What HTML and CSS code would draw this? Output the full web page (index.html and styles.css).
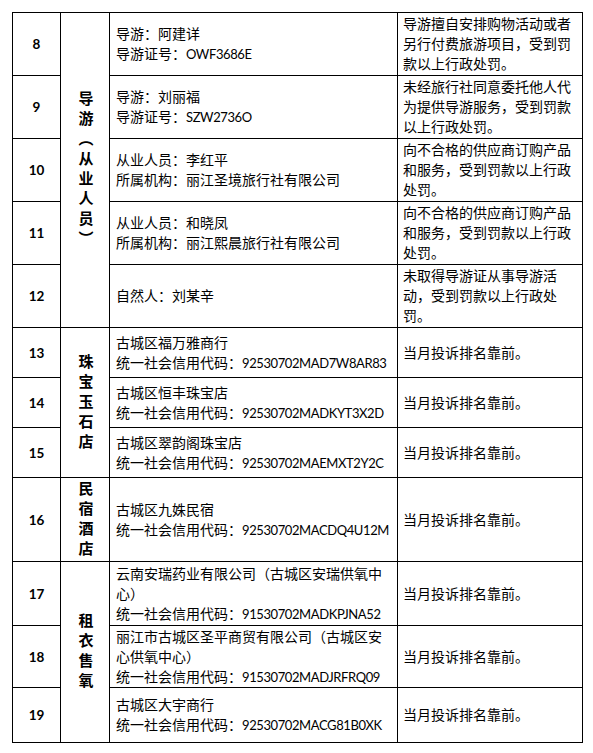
FILE: index.html
```html
<!DOCTYPE html>
<html lang="zh-CN">
<head>
<meta charset="utf-8">
<link rel="stylesheet" href="styles.css">
</head>
<body>
<table class="tbl">
  <colgroup>
    <col class="c-no"><col class="c-cat"><col class="c-name"><col class="c-reason">
  </colgroup>
  <tr class="r63">
    <td class="no">8</td>
    <td class="cat" rowspan="5"><span class="vt">导游（从业人员）</span></td>
    <td class="name">导游：阿建详<br><span class="ln">导游证号：<span class="code">OWF3686E</span></span></td>
    <td class="reason">导游擅自安排购物活动或者另行付费旅游项目，受到罚款以上行政处罚。</td>
  </tr>
  <tr class="r63">
    <td class="no">9</td>
    <td class="name">导游：刘丽福<br><span class="ln">导游证号：<span class="code">SZW2736O</span></span></td>
    <td class="reason">未经旅行社同意委托他人代为提供导游服务，受到罚款以上行政处罚。</td>
  </tr>
  <tr class="r63">
    <td class="no">10</td>
    <td class="name">从业人员：李红平<br>所属机构：丽江圣境旅行社有限公司</td>
    <td class="reason">向不合格的供应商订购产品和服务，受到罚款以上行政处罚。</td>
  </tr>
  <tr class="r63">
    <td class="no">11</td>
    <td class="name">从业人员：和晓凤<br>所属机构：丽江熙晨旅行社有限公司</td>
    <td class="reason">向不合格的供应商订购产品和服务，受到罚款以上行政处罚。</td>
  </tr>
  <tr class="r63">
    <td class="no">12</td>
    <td class="name">自然人：刘某辛</td>
    <td class="reason">未取得导游证从事导游活动，受到罚款以上行政处罚。</td>
  </tr>
  <tr class="r50">
    <td class="no">13</td>
    <td class="cat" rowspan="3"><span class="vt">珠宝玉石店</span></td>
    <td class="name">古城区福万雅商行<br><span class="ln">统一社会信用代码：<span class="code">92530702MAD7W8AR83</span></span></td>
    <td class="reason">当月投诉排名靠前。</td>
  </tr>
  <tr class="r50">
    <td class="no">14</td>
    <td class="name">古城区恒丰珠宝店<br><span class="ln">统一社会信用代码：<span class="code">92530702MADKYT3X2D</span></span></td>
    <td class="reason">当月投诉排名靠前。</td>
  </tr>
  <tr class="r50">
    <td class="no">15</td>
    <td class="name">古城区翠韵阁珠宝店<br><span class="ln">统一社会信用代码：<span class="code">92530702MAEMXT2Y2C</span></span></td>
    <td class="reason">当月投诉排名靠前。</td>
  </tr>
  <tr class="r84">
    <td class="no">16</td>
    <td class="cat"><span class="vt">民宿酒店</span></td>
    <td class="name">古城区九姝民宿<br><span class="ln">统一社会信用代码：<span class="code">92530702MACDQ4U12M</span></span></td>
    <td class="reason">当月投诉排名靠前。</td>
  </tr>
  <tr class="r64">
    <td class="no">17</td>
    <td class="cat" rowspan="3"><span class="vt">租衣售氧</span></td>
    <td class="name">云南安瑞药业有限公司（古城区安瑞供氧中心）<br><span class="ln">统一社会信用代码：<span class="code">91530702MADKPJNA52</span></span></td>
    <td class="reason">当月投诉排名靠前。</td>
  </tr>
  <tr class="r62">
    <td class="no">18</td>
    <td class="name">丽江市古城区圣平商贸有限公司（古城区安心供氧中心）<br><span class="ln">统一社会信用代码：<span class="code">91530702MADJRFRQ09</span></span></td>
    <td class="reason">当月投诉排名靠前。</td>
  </tr>
  <tr class="r55">
    <td class="no">19</td>
    <td class="name">古城区大宇商行<br><span class="ln">统一社会信用代码：<span class="code">92530702MACG81B0XK</span></span></td>
    <td class="reason">当月投诉排名靠前。</td>
  </tr>
</table>
</body>
</html>
```

FILE: styles.css
```css
html, body {
  margin: 0;
  padding: 0;
  background: #fff;
}
body {
  padding: 12px 0 0 12px;
  font-family: "Lato", "Noto Sans CJK SC", sans-serif;
  font-size: 14px;
  color: #000;
}
.tbl {
  border-collapse: collapse;
  table-layout: fixed;
  width: 570px;
  border: 1px solid #000;
}
.c-no { width: 48px; }
.c-cat { width: 49px; }
.c-name { width: 288px; }
.c-reason { width: 185px; }
.tbl td {
  border: 1px solid #000;
  vertical-align: middle;
  line-height: 20px;
  padding: 0 6px;
}
.tbl td.no {
  text-align: center;
  font-weight: 700;
  font-size: 13.5px;
  padding: 0;
}
.tbl td.cat {
  text-align: center;
  padding: 0;
  font-weight: 700;
  font-size: 15px;
  line-height: 0;
}
.vt {
  display: inline-block;
  vertical-align: middle;
  writing-mode: vertical-rl;
  letter-spacing: 5px;
  line-height: 1;
  padding-top: 2px;
}
.ln {
  white-space: nowrap;
}
.code {
  font-size: 13px;
  letter-spacing: -0.4px;
}
.tbl td.name {
  padding-left: 6px;
  padding-right: 6px;
}
.tbl td.reason {
  padding-left: 5px;
  padding-right: 6px;
}
.r63 { height: 63px; }
.r50 { height: 50px; }
.r84 { height: 84px; }
.r64 { height: 64px; }
.r62 { height: 62px; }
.r55 { height: 55px; }
```
